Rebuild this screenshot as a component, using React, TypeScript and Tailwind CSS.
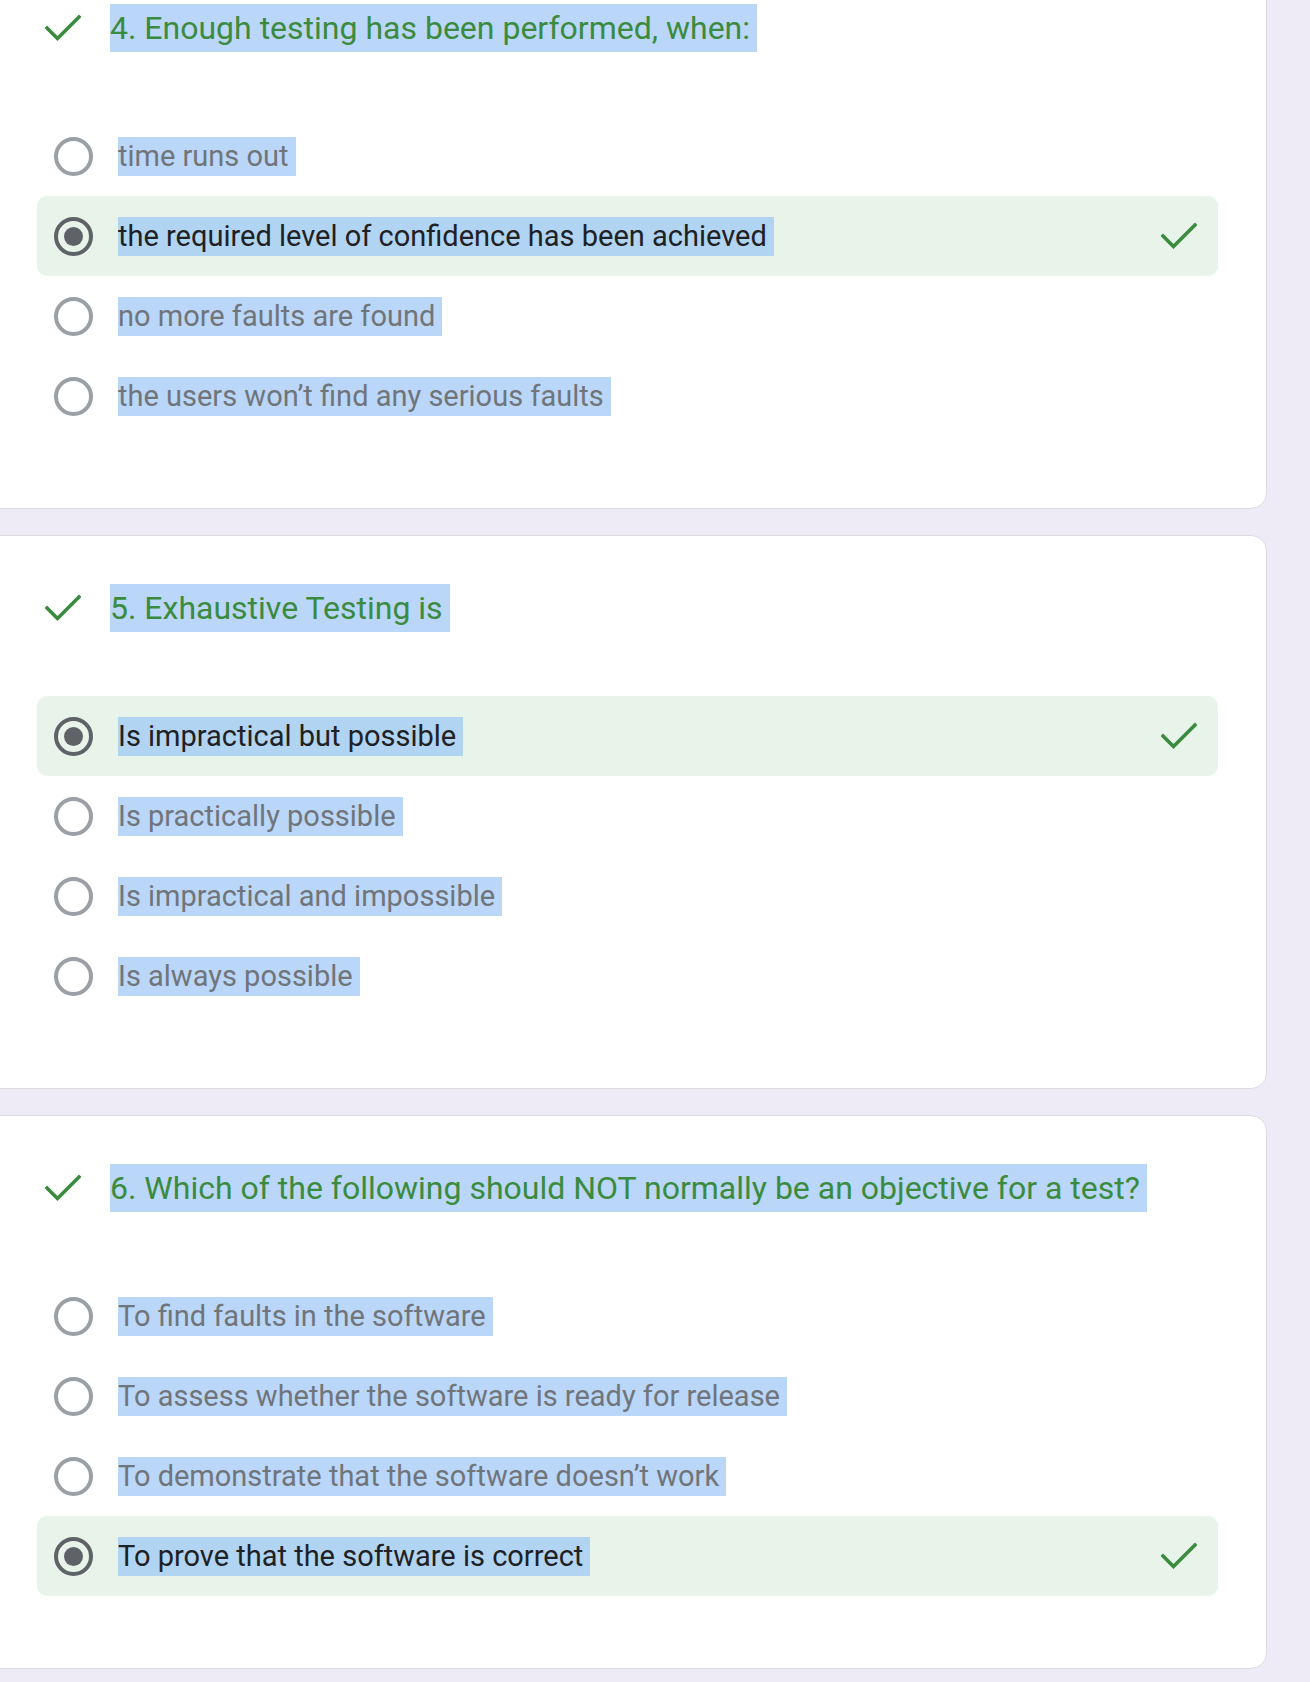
import React from 'react';

interface Question {
  title: string;
  options: string[];
  answer: number;
}

const questions: Question[] = [
  {
    title: '4. Enough testing has been performed, when:',
    options: [
      'time runs out',
      'the required level of confidence has been achieved',
      'no more faults are found',
      'the users won’t find any serious faults',
    ],
    answer: 1,
  },
  {
    title: '5. Exhaustive Testing is',
    options: [
      'Is impractical but possible',
      'Is practically possible',
      'Is impractical and impossible',
      'Is always possible',
    ],
    answer: 0,
  },
  {
    title: '6. Which of the following should NOT normally be an objective for a test?',
    options: [
      'To find faults in the software',
      'To assess whether the software is ready for release',
      'To demonstrate that the software doesn’t work',
      'To prove that the software is correct',
    ],
    answer: 3,
  },
];

const CheckMark = () => (
  <svg width="36" height="28" viewBox="0 0 36 28" fill="none" className="shrink-0">
    <polyline points="2,14 12.5,24.5 34,3" stroke="#3b8b3f" strokeWidth="3.6" strokeLinecap="square" />
  </svg>
);

const Radio = ({ checked }: { checked: boolean }) => (
  <div
    className={`w-[39px] h-[39px] rounded-full border-[4px] flex items-center justify-center shrink-0 ${
      checked ? 'border-[#5f6368]' : 'border-[#9aa0a6]'
    }`}
  >
    {checked && <div className="w-[19px] h-[19px] rounded-full bg-[#5f6368]" />}
  </div>
);

const QuestionCard = ({ q }: { q: Question }) => (
  <div className="bg-white border border-[#dadce0] rounded-[16px] pt-[48px] pb-[72px] pl-[56px] pr-[48px]">
    {/* title */}
    <div className="flex items-center pl-[8px]">
      <CheckMark />
      <span className="ml-[29px] inline-block leading-[48px] text-[32px] text-[#3b8b3f] bg-[#bad6f9] pr-[7px]">
        {q.title}
      </span>
    </div>

    <div className="mt-[64px]">
      {q.options.map((opt, i) => {
        const picked = i === q.answer;
        return (
          <div
            key={opt}
            className={`h-[80px] flex items-center pl-[17px] pr-[21px] rounded-[10px] ${picked ? 'bg-[#e8f3ea]' : ''}`}
          >
            <Radio checked={picked} />
            <span
              className={`ml-[25px] inline-block leading-[39px] text-[29px] pr-[7px] ${
                picked ? 'text-[#202124] bg-[#b1d4f2]' : 'text-[#70757a] bg-[#bad6f9]'
              }`}
            >
              {opt}
            </span>
            {picked && (
              <div className="ml-auto">
                <CheckMark />
              </div>
            )}
          </div>
        );
      })}
    </div>
  </div>
);

export default function App() {
  return (
    <div className="min-h-screen bg-[#eeebf6] overflow-hidden" style={{ fontFamily: 'Roboto, "Liberation Sans", sans-serif' }}>
      <div className="flex flex-col gap-[26px] mt-[-45px] ml-[-20px] w-[1287px]">
        {questions.map((q) => (
          <QuestionCard key={q.title} q={q} />
        ))}
      </div>
    </div>
  );
}
